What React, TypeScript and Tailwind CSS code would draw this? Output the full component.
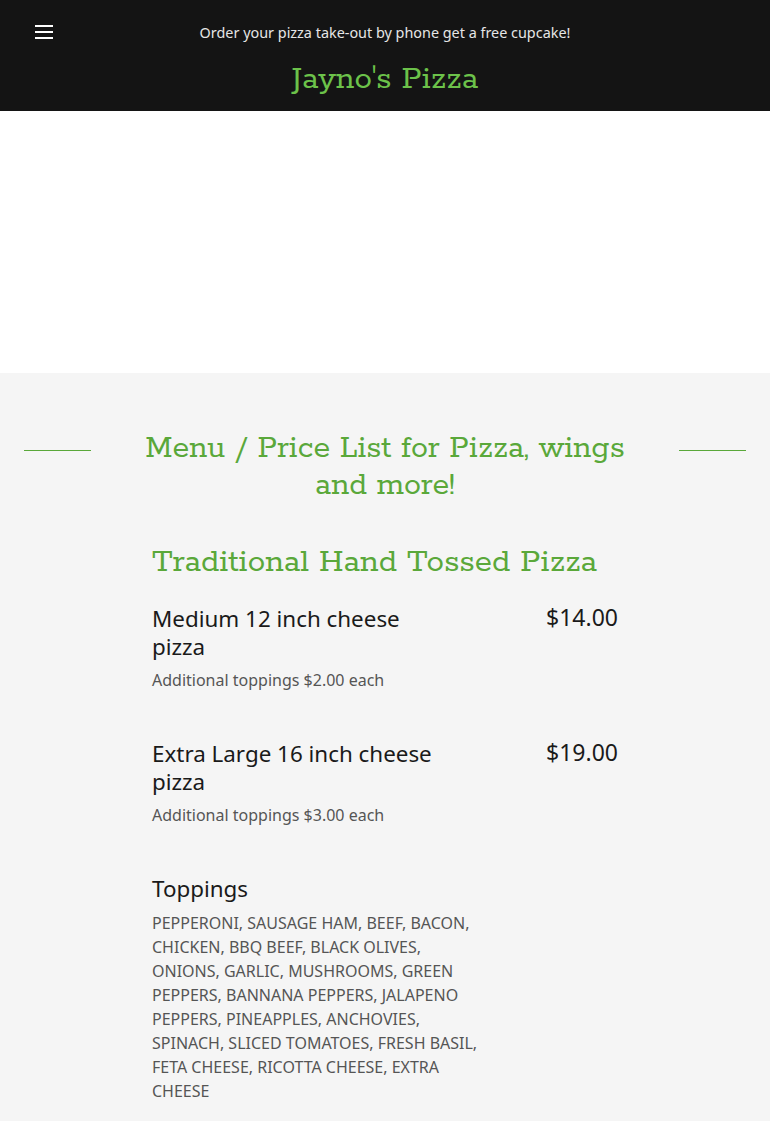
const slab = "font-['Rokkitt','DejaVu_Serif',serif] [font-stretch:condensed]";

type MenuItem = {
  name: string;
  price?: string;
  note: string;
  caps?: boolean;
};

const items: MenuItem[] = [
  { name: 'Medium 12 inch cheese pizza', price: '$14.00', note: 'Additional toppings $2.00 each' },
  { name: 'Extra Large 16 inch cheese pizza', price: '$19.00', note: 'Additional toppings $3.00 each' },
  {
    name: 'Toppings',
    note: 'PEPPERONI, SAUSAGE HAM, BEEF, BACON, CHICKEN, BBQ BEEF, BLACK OLIVES, ONIONS, GARLIC, MUSHROOMS, GREEN PEPPERS, BANNANA PEPPERS, JALAPENO PEPPERS, PINEAPPLES, ANCHOVIES, SPINACH, SLICED TOMATOES, FRESH BASIL, FETA CHEESE, RICOTTA CHEESE, EXTRA CHEESE',
    caps: true,
  },
];

const MenuRow = ({ item }: { item: MenuItem }) => {
  return (
    <div className="flex justify-between">
      <div className="w-[335px]">
        <h3 className="max-w-[295px] text-[22.4px] leading-[28px] text-[#1a1a1a]">{item.name}</h3>
        <p className={`text-base leading-6 text-[#555555] ${item.caps ? 'mt-[8px]' : 'mt-[7px]'}`}>
          {item.note}
        </p>
      </div>
      {item.price && (
        <div className="-mt-[2px] text-[23px] leading-[28px] text-[#1a1a1a]">{item.price}</div>
      )}
    </div>
  );
};

export default function App() {
  return (
    <div className="min-h-[1121px] bg-[#f5f5f5] font-['Noto_Sans','Open_Sans',sans-serif]">
      <header className="h-[111px] bg-[#141414] relative">
        <button className="absolute left-[35px] top-[25px] flex flex-col gap-[4.5px]">
          <span className="block h-[1.5px] w-[18px] bg-white" />
          <span className="block h-[1.5px] w-[18px] bg-white" />
          <span className="block h-[1.5px] w-[18px] bg-white" />
        </button>
        <div className="flex flex-col items-center pt-[23px]">
          <p className="text-[14.4px] leading-5 text-[#e6e6e6]">
            Order your pizza take-out by phone get a free cupcake!
          </p>
          <h1 className={`${slab} mt-[18px] text-[35px] leading-9 text-[#6cc24a]`}>Jayno's Pizza</h1>
        </div>
      </header>

      <div className="h-[262px] bg-white" />

      <section className="pt-[57px] pb-6">
        <div className="flex items-start px-6">
          <div className="mt-[20px] h-px w-[67px] bg-[#5aa83a]" />
          <h2 className={`${slab} flex-1 px-[50px] text-center text-[34px] leading-[37px] text-[#5aa83a]`}>
            Menu / Price List for Pizza, wings and more!
          </h2>
          <div className="mt-[20px] h-px w-[67px] bg-[#5aa83a]" />
        </div>

        <div className="mx-[152px] mt-[38px]">
          <h2 className={`${slab} text-[35px] leading-[40px] text-[#5aa83a]`}>Traditional Hand Tossed Pizza</h2>
          <div className="mt-[23px] flex flex-col gap-[48px]">
            {items.map(item => (
              <MenuRow key={item.name} item={item} />
            ))}
          </div>
        </div>
      </section>
    </div>
  );
}
